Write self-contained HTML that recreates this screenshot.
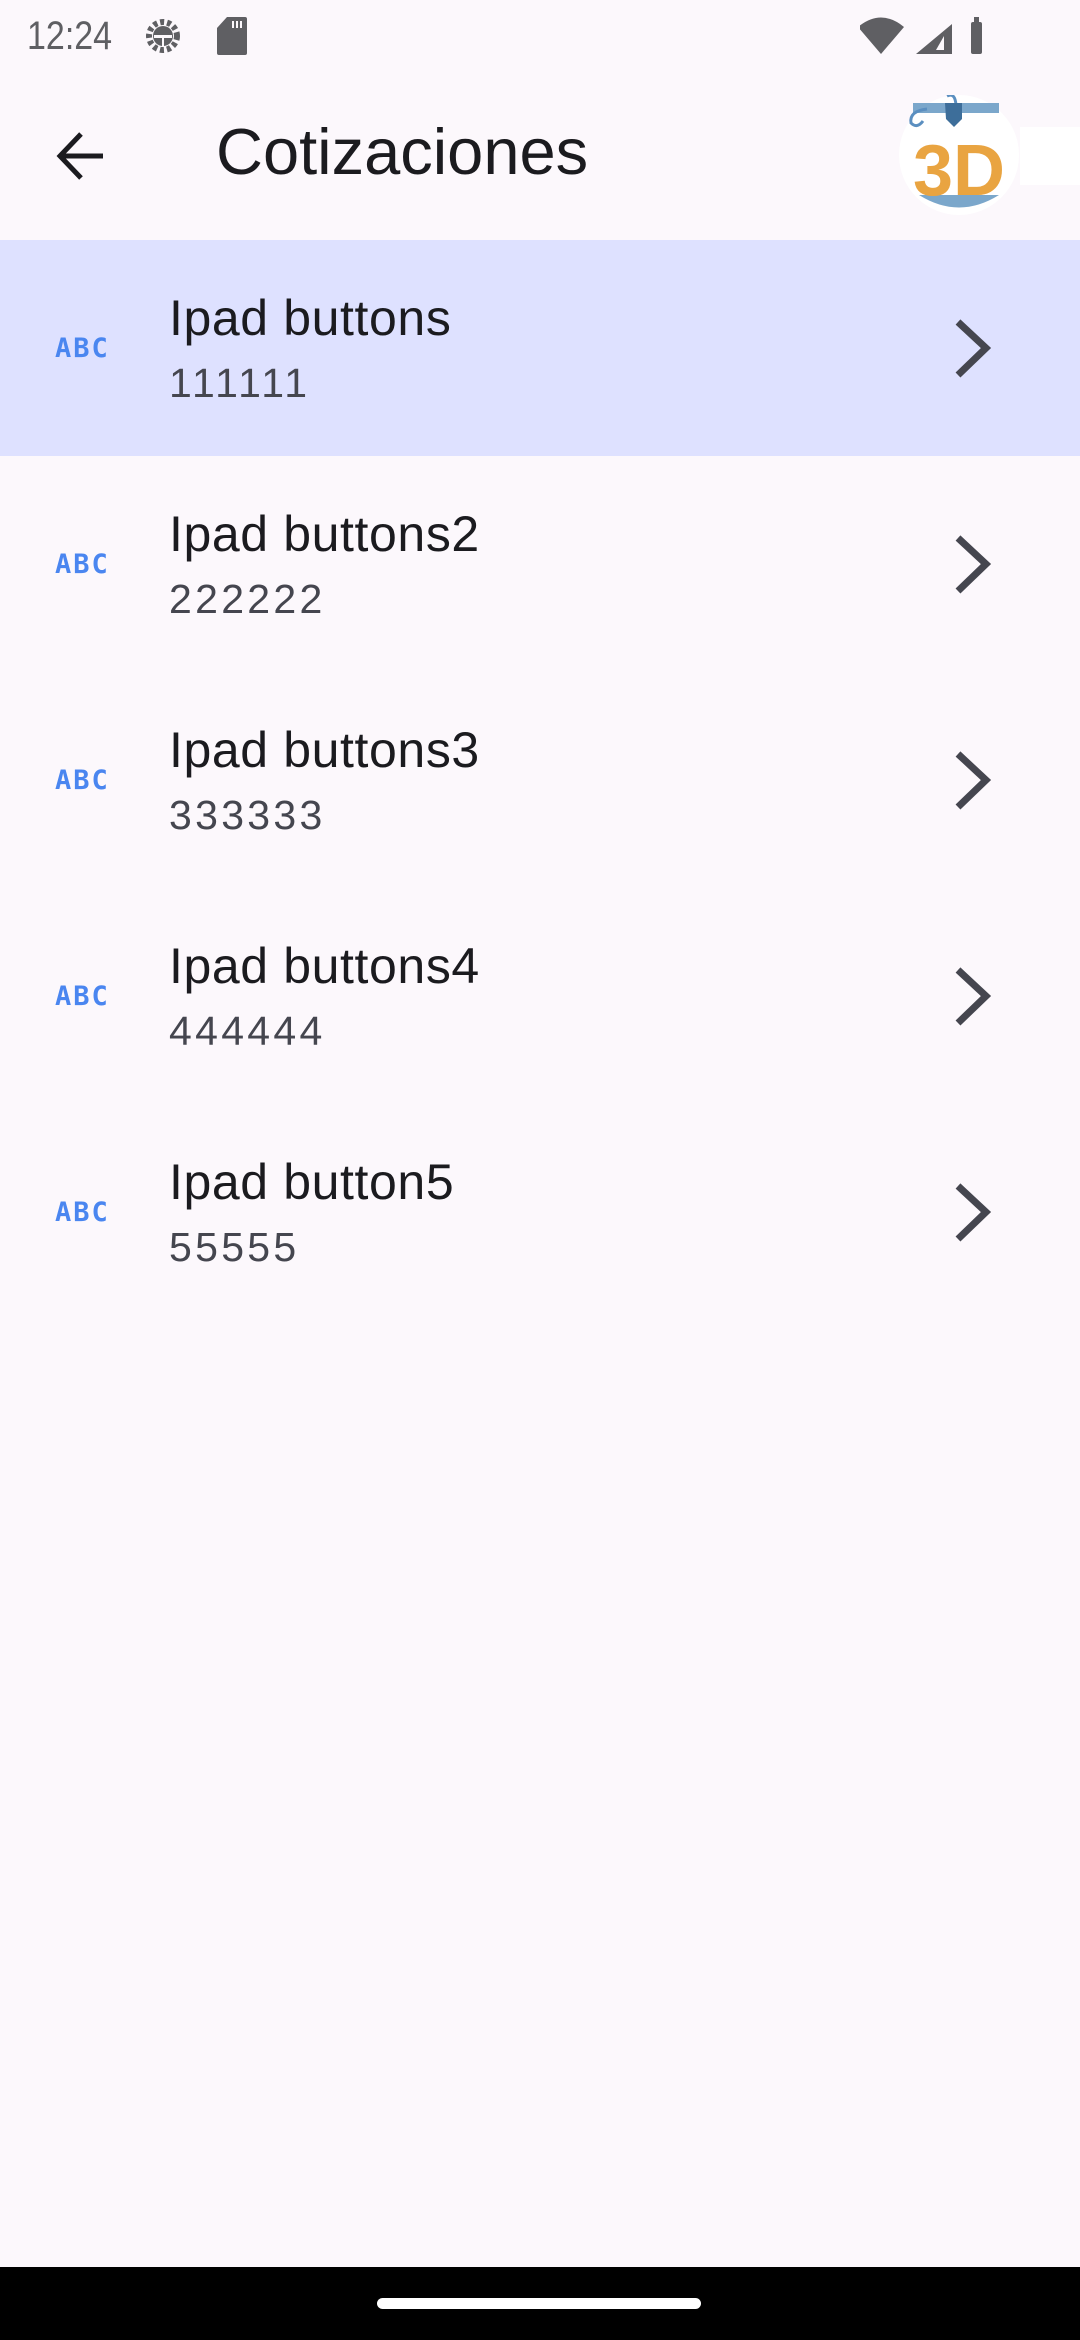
<!DOCTYPE html>
<html><head><meta charset="utf-8"><style>
*{margin:0;padding:0;box-sizing:border-box}
body{width:1080px;height:2340px;background:#fcf8fc;font-family:"Liberation Sans",sans-serif;position:relative;overflow:hidden}
.abs{position:absolute}
.row{position:absolute;left:0;width:1080px;height:216px}
.t{position:absolute;left:169px;font-size:50px;color:#1b1b1f;letter-spacing:0.6px}
.s{position:absolute;left:169px;font-size:41px;color:#45464f;letter-spacing:3.3px}
.abc{position:absolute;left:55px;font-size:27px;font-weight:bold;color:#4a86f0;letter-spacing:2px;font-family:"DejaVu Sans Mono",monospace}
</style></head><body>
<div class="abs" style="left:27px;top:14px;font-size:40px;color:#5f5f63;transform:scaleX(0.85);transform-origin:left">12:24</div>
<svg class="abs" style="left:140px;top:14px" width="50" height="44" viewBox="0 0 50 44"><circle cx="23" cy="22" r="14" fill="none" stroke="#5f5f63" stroke-width="6" stroke-dasharray="4 3"/><circle cx="23" cy="22" r="10" fill="#5f5f63"/><rect x="14" y="21" width="18" height="3" fill="#fcf8fc"/><rect x="22" y="22" width="2" height="10" fill="#fcf8fc"/></svg>
<svg class="abs" style="left:212px;top:16px" width="40" height="40" viewBox="0 0 40 40"><path d="M10 0H28Q30 0 30 2V36Q30 38 28 38H2Q0 38 0 36V11Z" transform="translate(5,1)" fill="#5f5f63"/><rect x="20" y="5" width="2" height="7" fill="#fcf8fc"/><rect x="24" y="5" width="2" height="7" fill="#fcf8fc"/><rect x="28" y="5" width="2" height="7" fill="#fcf8fc"/></svg>
<svg class="abs" style="left:860px;top:14px" width="130" height="44" viewBox="0 0 130 44"><path d="M2 13Q25 -6 48 13L25 40Z" transform="translate(-4,0)" fill="#5f5f63"/><path d="M92 10V40H56Z" fill="#5f5f63"/><path d="M86 22V36H78Z" fill="#fcf8fc" transform="translate(-2,0)"/><rect x="111" y="8" width="11" height="32" rx="2" fill="#5f5f63"/><rect x="114" y="3" width="5" height="6" fill="#5f5f63"/></svg>

<svg class="abs" style="left:55px;top:130px" width="54" height="52" viewBox="0 0 54 52"><path d="M48 26H6M26 4L5 26L26 48" fill="none" stroke="#1b1b1f" stroke-width="5"/></svg>
<div class="abs" style="left:216px;top:114px;font-size:65px;color:#1b1b1f">Cotizaciones</div>
<div class="abs" style="left:1020px;top:127px;width:60px;height:58px;background:#fff"></div>
<svg class="abs" style="left:899px;top:95px" width="120" height="120" viewBox="0 0 120 120"><circle cx="60" cy="60" r="60" fill="#fff"/><path d="M20 100Q60 125 100 100Z" fill="#7ba7cb"/><rect x="14" y="8" width="86" height="10" fill="#7ba7cb"/><path d="M28 14Q10 16 12 28Q18 34 24 26" fill="none" stroke="#5b8fc0" stroke-width="3"/><path d="M48 1Q56 -3 57 10" fill="none" stroke="#5b8fc0" stroke-width="3"/><path d="M46 8H63V24L55 32L47 24Z" fill="#3d6e9a"/><text x="14" y="100" font-family="Liberation Sans" font-weight="bold" font-size="72" fill="#e9a441">3D</text></svg>

<div class="row" style="top:240px;background:#dee1ff"></div>
<div class="row" style="top:240px"><div class="abc" style="top:93px">ABC</div><div class="t" style="top:49px">Ipad buttons</div><div class="s" style="top:120px">111111</div></div>
<div class="row" style="top:456px"><div class="abc" style="top:93px">ABC</div><div class="t" style="top:49px">Ipad buttons2</div><div class="s" style="top:120px">222222</div></div>
<div class="row" style="top:672px"><div class="abc" style="top:93px">ABC</div><div class="t" style="top:49px">Ipad buttons3</div><div class="s" style="top:120px">333333</div></div>
<div class="row" style="top:888px"><div class="abc" style="top:93px">ABC</div><div class="t" style="top:49px">Ipad buttons4</div><div class="s" style="top:120px">444444</div></div>
<div class="row" style="top:1104px"><div class="abc" style="top:93px">ABC</div><div class="t" style="top:49px">Ipad button5</div><div class="s" style="top:120px">55555</div></div>

<svg class="abs" style="left:0;top:240px" width="1080" height="1080" viewBox="0 0 1080 1080">
<g fill="none" stroke="#45464f" stroke-width="7">
<path d="M958 82L986 108L958 135"/>
<path d="M958 298L986 324L958 351"/>
<path d="M958 514L986 540L958 567"/>
<path d="M958 730L986 756L958 783"/>
<path d="M958 946L986 972L958 999"/>
</g></svg>

<div class="abs" style="left:0;top:2267px;width:1080px;height:73px;background:#000"></div>
<div class="abs" style="left:377px;top:2298px;width:324px;height:11px;border-radius:6px;background:#fff"></div>
</body></html>
